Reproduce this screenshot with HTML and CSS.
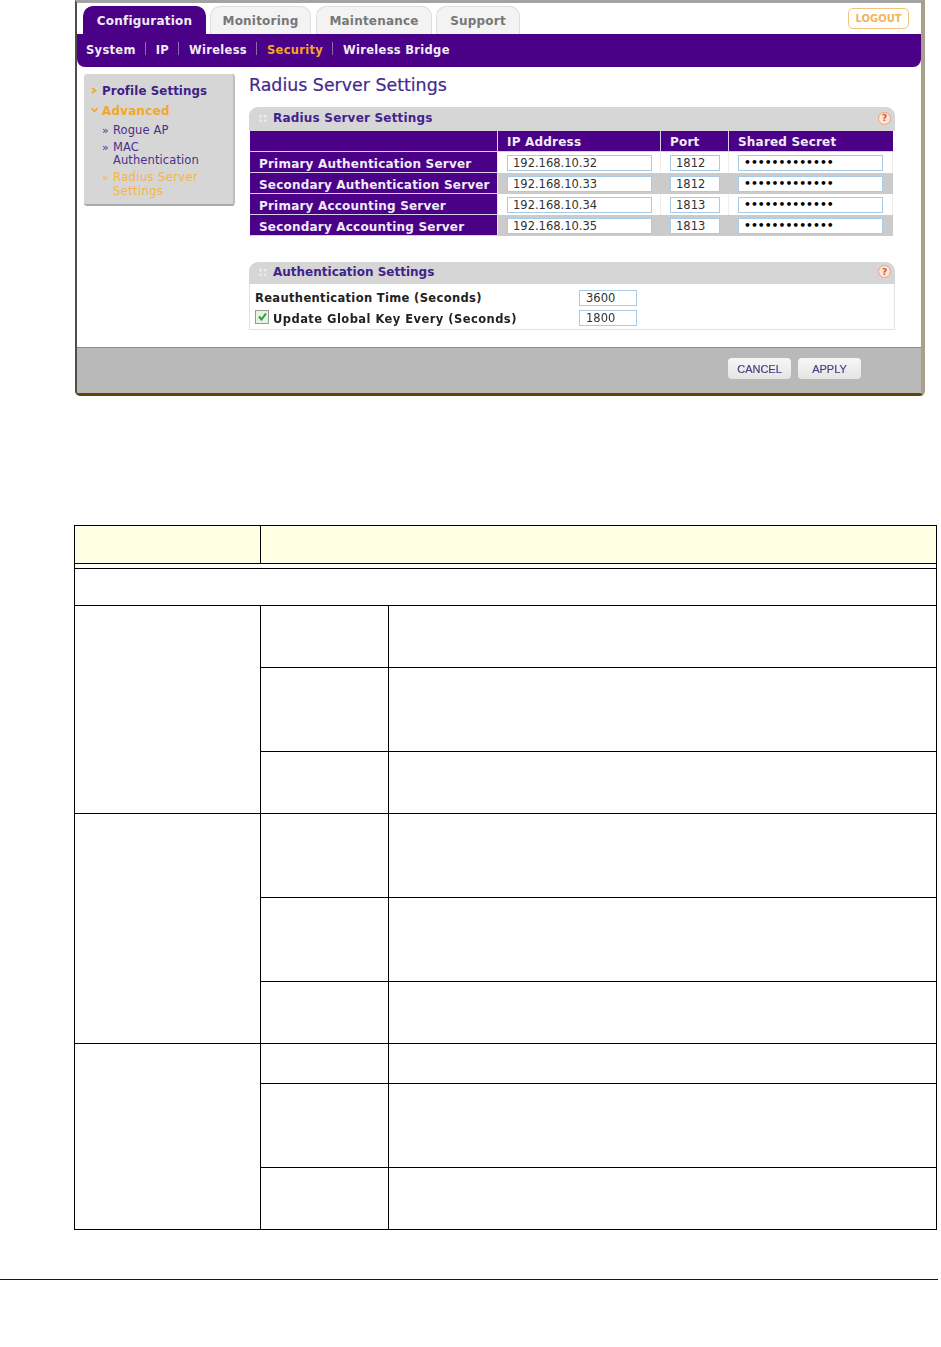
FILE: index.html
```html
<!DOCTYPE html>
<html lang="en">
<head>
<meta charset="utf-8">
<title>Radius Server Settings</title>
<link rel="stylesheet" href="styles.css">
</head>
<body>
<div class="shot">
  <div class="tabrow">
    <div class="tabs">
      <div class="tab tab-on t1">Configuration</div>
      <div class="tab t2">Monitoring</div>
      <div class="tab t3">Maintenance</div>
      <div class="tab t4">Support</div>
    </div>
    <div class="logout">LOGOUT</div>
  </div>
  <nav class="subnav">
    <span class="sub s1">System</span><i class="sep"></i>
    <span class="sub s2">IP</span><i class="sep"></i>
    <span class="sub s3">Wireless</span><i class="sep"></i>
    <span class="sub s4 sub-on">Security</span><i class="sep"></i>
    <span class="sub">Wireless Bridge</span>
  </nav>
  <div class="main">
    <aside class="side">
      <div class="side-h"><svg class="mark" width="6" height="7" viewBox="0 0 6 7"><path d="M1 1 L4.5 3.5 L1 6" fill="none" stroke="#f5a623" stroke-width="1.6"/></svg>Profile Settings</div>
      <div class="side-h side-or"><svg class="mark" width="7" height="6" viewBox="0 0 7 6"><path d="M.5 1 L3.5 4.5 L6.5 1" fill="none" stroke="#f5a623" stroke-width="1.6"/></svg>Advanced</div>
      <div class="side-i"><span class="mark2">»</span>Rogue AP</div>
      <div class="side-i"><span class="mark2">»</span>MAC<br>Authentication</div>
      <div class="side-i side-ior"><span class="mark2">»</span>Radius Server<br>Settings</div>
    </aside>
    <section class="content">
      <h1 class="title">Radius Server Settings</h1>
      <div class="phead"><span class="dots">::</span><span class="ptitle">Radius Server Settings</span><span class="help">?</span></div>
      <div class="grid">
        <div class="gh"></div><div class="gh">IP Address</div><div class="gh">Port</div><div class="gh">Shared Secret</div>
        <div class="gl">Primary Authentication Server</div><div class="gc"><div class="f fip">192.168.10.32</div></div><div class="gc"><div class="f fport">1812</div></div><div class="gc"><div class="f fsec">•••••••••••••</div></div>
        <div class="gl">Secondary Authentication Server</div><div class="gc alt"><div class="f fip">192.168.10.33</div></div><div class="gc alt"><div class="f fport">1812</div></div><div class="gc alt"><div class="f fsec">•••••••••••••</div></div>
        <div class="gl">Primary Accounting Server</div><div class="gc"><div class="f fip">192.168.10.34</div></div><div class="gc"><div class="f fport">1813</div></div><div class="gc"><div class="f fsec">•••••••••••••</div></div>
        <div class="gl">Secondary Accounting Server</div><div class="gc alt"><div class="f fip">192.168.10.35</div></div><div class="gc alt"><div class="f fport">1813</div></div><div class="gc alt"><div class="f fsec">•••••••••••••</div></div>
      </div>
      <div class="phead phead2"><span class="dots">::</span><span class="ptitle ptitle2">Authentication Settings</span><span class="help">?</span></div>
      <div class="auth">
        <div class="arow"><span class="alabel">Reauthentication Time (Seconds)</span><div class="f fnum">3600</div></div>
        <div class="arow">
          <span class="alabel alabel2"><span class="cb"><svg width="11" height="11" viewBox="0 0 11 11"><path d="M2 5.5 L4.5 8.5 L9 2.5" fill="none" stroke="#2f9a3a" stroke-width="2"/></svg></span><span class="cbt">Update Global Key Every (Seconds)</span></span><div class="f fnum">1800</div>
        </div>
      </div>
    </section>
  </div>
  <div class="foot">
    <div class="btn">CANCEL</div>
    <div class="btn">APPLY</div>
  </div>
</div>

<table class="doc">
  <colgroup><col class="c1"><col class="c2"><col class="c3"></colgroup>
  <tr class="r38 head"><td></td><td colspan="2"></td></tr>
  <tr class="r5"><td colspan="3"></td></tr>
  <tr class="r37"><td colspan="3"></td></tr>
  <tr class="r62"><td rowspan="3"></td><td></td><td></td></tr>
  <tr class="r84"><td></td><td></td></tr>
  <tr class="r62"><td></td><td></td></tr>
  <tr class="r84"><td rowspan="3"></td><td></td><td></td></tr>
  <tr class="r84"><td></td><td></td></tr>
  <tr class="r62"><td></td><td></td></tr>
  <tr class="r40"><td rowspan="3"></td><td></td><td></td></tr>
  <tr class="r84"><td></td><td></td></tr>
  <tr class="r62"><td></td><td></td></tr>
</table>
<div class="rule"></div>
</body>
</html>
```
FILE: styles.css
```css
* { box-sizing: border-box; }
html, body { margin: 0; padding: 0; background: #fff; }
body { width: 941px; height: 1347px; overflow: hidden; font-family: "DejaVu Sans", Verdana, sans-serif; }

.shot {
  width: 850px; height: 396px; margin-left: 75px;
  display: flex; flex-direction: column;
  background: #fff;
  border-top: 3px solid #a3a3a3;
  border-left: 2px solid #4d4d4d;
  border-right: 4px solid #a89f8c;
  border-bottom: 3px solid #5e4506;
  border-bottom-left-radius: 5px; border-bottom-right-radius: 5px;
  filter: blur(0.45px);
  overflow: hidden;
}

/* tabs */
.tabrow { height: 31px; display: flex; justify-content: space-between; align-items: flex-start; padding: 3px 12px 0 6px; background: #fff; }
.tabs { display: flex; height: 28px; align-items: stretch; }
.tab {
  display: flex; align-items: center; justify-content: center;
  font-size: 12px; font-weight: bold; color: #777; letter-spacing: .2px;
  background: #f3f3f3; border: 1px solid #ddd; border-bottom: 0;
  border-radius: 10px 10px 0 0;
}
.tab-on { background: #4b0088; color: #f0ecf6; border-color: #4b0088; }
.t1 { width: 123px; margin-right: 4px; }
.t2 { width: 101px; margin-right: 5px; }
.t3 { width: 116px; margin-right: 4px; }
.t4 { width: 84px; }
.logout {
  width: 61px; height: 21px; margin-top: 2px;
  display: flex; align-items: center; justify-content: center;
  font-size: 10px; font-weight: bold; color: #f0b45a;
  border: 1.5px solid #f2c27a; border-radius: 5px;
}

.subnav {
  height: 33px; display: flex; align-items: center; padding: 0 0 2px 9px;
  background: #4b0088; color: #f0ecf6;
  font-size: 11.5px; font-weight: bold; letter-spacing: .3px;
  border-radius: 0 0 8px 8px;
}
.sep { width: 1px; height: 13px; background: #8e6cb3; margin: 0 10px 3px 9px; }
.sub-on { color: #f5a623; }

/* main */
.main { height: 280px; display: flex; background: #fff; }
.side {
  width: 151px; height: 132px; margin: 7px 0 0 7px; padding: 8px 6px 0 7px;
  background: #d6d6d6; border-bottom: 2px solid #a9a9a9; border-right: 2px solid #bdbdbd;
  border-radius: 3px;
  font-size: 11.5px; color: #4a2f8a; letter-spacing: .1px;
}
.side-h { position: relative; padding-left: 11px; font-weight: bold; color: #3f1f86; font-size: 11.8px; letter-spacing: .1px; line-height: 18px; margin-bottom: 2px; }
.side-or { color: #f5a623; margin-bottom: 0; letter-spacing: .35px; }
.mark { position: absolute; left: 0; top: 5px; }
.side-i { padding-left: 22px; line-height: 13.5px; margin-top: 3.5px; }
.side-ior { color: #f5b544; letter-spacing: .4px; }
.mark2 { display: inline-block; width: 11px; margin-left: -11px; font-size: 11px; }

.content { width: 646px; margin-left: 14px; }
.title { margin: 7px 0 0; font-size: 17.4px; font-weight: normal; line-height: 22px; color: #45288f; -webkit-text-stroke: .2px #45288f; }
.phead {
  height: 24px; margin-top: 11px; display: flex; align-items: center; padding: 0 4px 2px 9px;
  background: #d6d6d6; border-radius: 9px 9px 0 0;
}
.phead2 { margin-top: 26px; height: 22px; padding-bottom: 3px; }
.dots { width: 15px; color: #eee; font-size: 12px; font-weight: bold; }
.ptitle { flex: 1; font-size: 12px; font-weight: bold; color: #42228d; letter-spacing: .2px; }
.ptitle2 { letter-spacing: 0; }
.help {
  width: 13px; height: 13px; border-radius: 50%; border: 1.5px solid #f0a080; background: #fbe6d8;
  color: #d8532a; font-size: 9px; font-weight: bold; display: flex; align-items: center; justify-content: center;
}

.grid {
  display: grid; grid-template-columns: 248px 163px 68px 164px; grid-template-rows: 21px 21px 21px 21px 21px;
  margin: 0 2px 0 1px; background: #fff;
}
.gh, .gl {
  background: #4b0088; color: #f0ecf6; font-size: 12px; font-weight: bold;
  display: flex; align-items: center; padding-left: 9px;
  border-right: 1px solid #e8e4f0; border-bottom: 1px solid #d8d0e6; letter-spacing: .2px; white-space: nowrap;
}
.gl { padding-top: 3px; }
.gh { border-right-color: #d8d0e6; padding-top: 2px; }
.gh:nth-child(4) { border-right: 0; }
.gc { display: flex; align-items: center; padding-left: 9px; background: #fff; border-right: 1px solid #eee; }
.alt { background: #cbcbcb; border-right-color: #cbcbcb; }
.f {
  height: 16px; display: flex; align-items: center;
  border: 1px solid #a9cbe6; background: #fff; font-size: 11.5px; color: #333; padding-left: 5px; white-space: nowrap;
}
.fip { width: 145px; }
.fport { width: 50px; }
.fsec { width: 145px; font-size: 10.8px; font-weight: bold; color: #000; }
.fnum { width: 58px; padding-left: 6px; }

.auth { border: 1px solid #e3e3e3; border-top: 0; height: 46px; padding: 6px 0 0 5px; display: flex; flex-direction: column; gap: 4px; }
.arow { display: flex; align-items: center; height: 16px; }
.alabel { width: 324px; display: flex; align-items: center; font-size: 11.5px; font-weight: bold; color: #222; letter-spacing: .35px; white-space: nowrap; }
.alabel2 { letter-spacing: .45px; }
.cbt { padding-top: 1px; }
.cb { width: 14px; height: 14px; margin: -3px 4px 0 0; border: 1px solid #999; background: #e4f3e2; display: flex; align-items: center; justify-content: center; }

.foot {
  flex: 1; display: flex; justify-content: flex-end; gap: 7px; align-items: flex-start;
  padding: 10px 60px 0 0;
  background: #b9b9b9; border-top: 1px solid #8a8a8a;
}
.btn {
  width: 63px; height: 21px; display: flex; align-items: center; justify-content: center;
  background: linear-gradient(#f7f7f7, #e4e4e2); border-radius: 4px;
  font-family: "Liberation Sans", Arial, sans-serif; font-size: 11px; color: #4b3d85;
  -webkit-text-stroke: .2px #4b3d85;
}

/* document table */
.doc {
  margin: 129px 0 0 74px; width: 862px; table-layout: fixed; border-collapse: collapse;
}
.doc td { border: 1px solid #000; padding: 0; font-size: 0; line-height: 0; }
.c1 { width: 186px; }
.c2 { width: 128px; }
.c3 { width: 548px; }
.head td { background: #ffffe3; }
.r38 { height: 38px; }
.r5 { height: 5px; }
.r37 { height: 37px; }
.r62 { height: 62px; }
.r84 { height: 84px; }
.r40 { height: 40px; }
.rule { margin-top: 49px; width: 938px; height: 1px; background: #0000c4; }
```
